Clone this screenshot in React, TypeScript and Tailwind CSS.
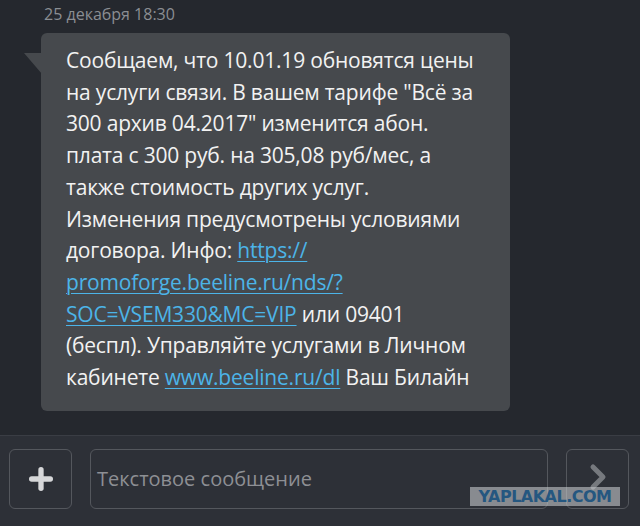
import { Plus, ChevronRight } from 'lucide-react'

const lines: { t: string; link?: boolean }[][] = [
  [{ t: 'Сообщаем, что 10.01.19 обновятся цены' }],
  [{ t: 'на услуги связи. В вашем тарифе "Всё за' }],
  [{ t: '300 архив 04.2017" изменится абон.' }],
  [{ t: 'плата с 300 руб. на 305,08 руб/мес, а' }],
  [{ t: 'также стоимость других услуг.' }],
  [{ t: 'Изменения предусмотрены условиями' }],
  [{ t: 'договора. Инфо: ' }, { t: 'https://', link: true }],
  [{ t: 'promoforge.beeline.ru/nds/?', link: true }],
  [{ t: 'SOC=VSEM330&MC=VIP', link: true }, { t: ' или 09401' }],
  [{ t: '(беспл). Управляйте услугами в Личном' }],
  [{ t: 'кабинете ' }, { t: 'www.beeline.ru/dl', link: true }, { t: ' Ваш Билайн' }],
]

export default function App() {
  return (
    <div
      className="w-[640px] h-[526px] bg-[#25282e] flex flex-col relative overflow-hidden"
      style={{ fontFamily: '"Open Sans", "Noto Sans", sans-serif' }}
    >
      <div className="flex-1 pl-[41px] pt-[4px]">
        <div className="text-[16px] leading-[21px] text-[#8b8e93] pl-[3px]">25 декабря 18:30</div>
        <div className="relative mt-[8px] w-[469px] rounded-[6px] bg-[#46494d] pl-[25px] pr-[16px] pt-[12px] pb-[17px]">
          <svg className="absolute left-[-17px] top-[20px]" width="18" height="21" viewBox="0 0 18 21">
            <polygon points="0,0 18,0 18,21" fill="#46494d" />
          </svg>
          {lines.map((l, i) => (
            <div key={i} className="text-[21px] leading-[31.7px] text-[#f2f2f2] whitespace-nowrap tracking-[-0.2px]">
              {l.map((s, j) =>
                s.link ? (
                  <span key={j} className="text-[#4cb4e8] underline underline-offset-[3px] decoration-1">
                    {s.t}
                  </span>
                ) : (
                  <span key={j}>{s.t}</span>
                )
              )}
            </div>
          ))}
        </div>
      </div>
      <div className="h-[91px] border-t border-[#3a3d44] bg-[#2d3037] flex items-center gap-[18px] px-[9px] pb-[4px]">
        <div className="w-[63px] h-[60px] rounded-[6px] border border-[#54575d] flex items-center justify-center">
          <Plus className="w-[32px] h-[32px] text-[#d6d7d9]" strokeWidth={4} />
        </div>
        <div className="w-[458px] h-[60px] rounded-[6px] border border-[#54575d] flex items-center pl-[6px]">
          <span className="text-[20px] text-[#8d8f94]">Текстовое сообщение</span>
        </div>
        <div className="w-[63px] h-[60px] rounded-[6px] border border-[#54575d] flex items-center justify-center">
          <ChevronRight className="w-[40px] h-[40px] text-[#76797e] -mt-[4px]" strokeWidth={3} />
        </div>
      </div>
      <div className="absolute left-[470px] top-[487px] w-[150px] h-[19px] bg-[#c4c8cc]/60 flex items-center justify-center">
        <span
          className="text-[16px] font-black text-[#255780] tracking-[-0.5px]"
          style={{ fontFamily: '"DejaVu Sans", sans-serif' }}
        >
          YAPLAKAL.COM
        </span>
      </div>
    </div>
  )
}
